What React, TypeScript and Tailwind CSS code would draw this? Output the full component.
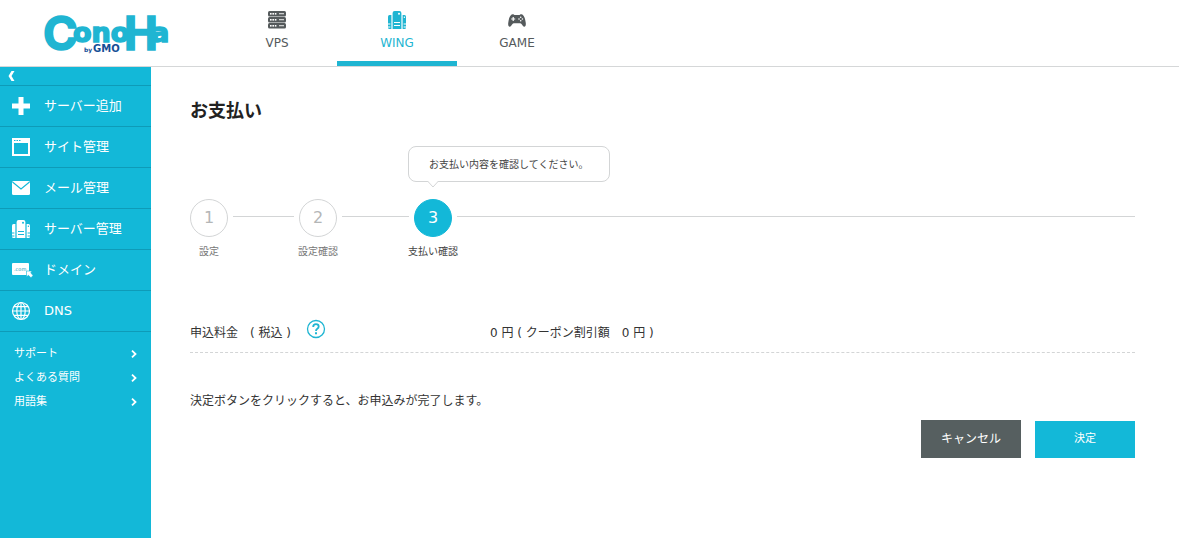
import type { ReactNode } from "react";

function ServerRackIcon() {
  return (
    <svg width="18" height="18" viewBox="0 0 18 18" fill="currentColor" aria-hidden="true">
      {[0, 6, 12].map((y) => (
        <g key={y}>
          <rect x="0" y={y} width="18" height="5.4" rx="1.5" />
          <g fill="#fff">
            <rect x="2" y={y + 2} width="1.6" height="1.6" />
            <rect x="4.4" y={y + 2} width="1.6" height="1.6" />
            <rect x="6.8" y={y + 2} width="1.6" height="1.6" />
            <rect x="11" y={y + 2.3} width="5" height="0.9" />
          </g>
        </g>
      ))}
    </svg>
  );
}

function TowerIcon({ line }: { line: string }) {
  return (
    <svg width="18" height="18" viewBox="0 0 18 18" fill="currentColor" aria-hidden="true">
      <path d="M0 5.5Q0 4 1.5 4H3.4V18H1.5Q0 18 0 16.5Z" />
      <path d="M18 5.5Q18 4 16.5 4H14.6V18H16.5Q18 18 18 16.5Z" />
      <path d="M4.6 2Q4.6 0 6.6 0H11.4Q13.4 0 13.4 2V18H4.6Z" />
      <path d="M6 11.500H12M6 14.500H12M0 13H2.400M0 16H2.400M15.600 13H18M15.600 16H18" stroke={line} />
      <circle cx="11" cy="2.8" r="1" fill={line} />
      <circle cx="16.4" cy="6.2" r="0.7" fill={line} />
    </svg>
  );
}

function GamepadIcon() {
  return (
    <svg width="18" height="13" viewBox="0 0 18 13" fill="currentColor" aria-hidden="true">
      <path d="M4.500 0.300C5.600 0 6.200 1 7 1H11C11.800 1 12.400 0 13.500 0.300C16 1 17 4 17.700 8.500C18.200 11.500 17.300 13 16 12.700C14.500 12.400 13.700 9.300 12.300 9.300H5.700C4.300 9.300 3.500 12.400 2 12.700C0.700 13 -0.200 11.500 0.300 8.500C1 4 2 1 4.500 0.300Z" />
      <g fill="#fff">
        <path d="M4.600 3H5.800V4.400H7.200V5.600H5.800V7H4.600V5.600H3.200V4.400H4.600Z" />
        <circle cx="12.7" cy="3.3" r="0.8" />
        <circle cx="12.7" cy="6.7" r="0.8" />
        <circle cx="11" cy="5" r="0.8" />
        <circle cx="14.4" cy="5" r="0.8" />
      </g>
    </svg>
  );
}

function PlusIcon() {
  return (
    <svg width="20" height="18" viewBox="0 0 20 18" fill="currentColor" aria-hidden="true">
      <path d="M7.500 0H12.500V6.500H19V11.500H12.500V18H7.500V11.500H1V6.500H7.500Z" />
    </svg>
  );
}

function WindowIcon() {
  return (
    <svg width="20" height="18" viewBox="0 0 20 18" aria-hidden="true">
      <path fill="currentColor" fillRule="evenodd" d="M1 0H19V18H1ZM3 5V16H17V5Z" />
      <path stroke="#13b8d8" d="M3 2.500H4.500M5.500 2.500H7M8 2.500H9.500" />
    </svg>
  );
}

function MailIcon() {
  return (
    <svg width="20" height="14" viewBox="0 0 20 14" aria-hidden="true">
      <rect x="1" width="18" height="14" rx="1.5" fill="currentColor" />
      <path d="M1.500 1L10 8L18.500 1" fill="none" stroke="#13b8d8" strokeWidth="1.1" />
    </svg>
  );
}

function DomainIcon() {
  return (
    <svg width="22" height="16" viewBox="0 0 22 16" aria-hidden="true">
      <rect x="1" y="1" width="17" height="12" rx="1" fill="currentColor" />
      <text x="3" y="9" fontSize="5" fontFamily="DejaVu Sans, sans-serif" fill="#0e9bb8">.com</text>
      <path d="M15.500 9H21L19.800 10.800L22 13.500L20 15.800L17.500 13.300L15.500 14.800Z" fill="currentColor" stroke="#13b8d8" strokeWidth="0.6" />
    </svg>
  );
}

function GlobeIcon() {
  return (
    <svg width="20" height="20" viewBox="0 0 20 20" fill="none" stroke="currentColor" strokeWidth="1.2" aria-hidden="true">
      <circle cx="10" cy="10" r="8.5" />
      <ellipse cx="10" cy="10" rx="4.2" ry="8.5" />
      <path d="M10 1.500V18.500M1.500 10H18.500M3 5.700H17M3 14.300H17" />
    </svg>
  );
}

function Chevron() {
  return (
    <svg width="6" height="8" viewBox="0 0 6 8" fill="none" stroke="currentColor" strokeWidth="1.8" aria-hidden="true">
      <path d="M1 0.700L4.500 4L1 7.300" />
    </svg>
  );
}

function Logo() {
  return (
    <svg width="140" height="64" viewBox="0 0 140 64" role="img" aria-label="ConoHa by GMO" fontWeight="700">
      <text fontFamily="DejaVu Sans, sans-serif" fill="#1fb5d2" stroke="#1fb5d2" strokeWidth="1.6">
        <tspan x="3" y="50" fontSize="47" fontFamily="Inter, sans-serif">C</tspan>
        <tspan x="33" y="42" fontSize="27">ono</tspan>
        <tspan x="84" y="50" fontSize="48" fontFamily="Roboto, sans-serif">H</tspan>
        <tspan x="111" y="42" fontSize="27">a</tspan>
      </text>
      <text fill="#164f96" fontFamily="DejaVu Sans, sans-serif">
        <tspan x="44" y="52" fontSize="6">by</tspan>
        <tspan x="53" y="52" fontSize="10">GMO</tspan>
      </text>
    </svg>
  );
}

const tabs = [
  { label: "VPS", icon: <ServerRackIcon /> },
  { label: "WING", icon: <TowerIcon line="#fff" />, active: true },
  { label: "GAME", icon: <GamepadIcon /> },
];

const menu = [
  { label: "サーバー追加", icon: <PlusIcon /> },
  { label: "サイト管理", icon: <WindowIcon /> },
  { label: "メール管理", icon: <MailIcon /> },
  { label: "サーバー管理", icon: <TowerIcon line="#13b8d8" /> },
  { label: "ドメイン", icon: <DomainIcon /> },
  { label: "DNS", icon: <GlobeIcon /> },
];

const links = ["サポート", "よくある質問", "用語集"];

function Header() {
  return (
    <header className="flex border-b border-[#d5d7d8]">
      <a href="#" className="w-[217px] shrink-0 pl-10">
        <Logo />
      </a>
      <nav className="flex">
        {tabs.map((tab) => (
          <a
            key={tab.label}
            href="#"
            className={`flex h-[66px] w-[120px] flex-col items-center border-b-5 pt-[11px] text-[12px] leading-4 ${
              tab.active ? "border-[#1fb5d2] text-[#1fb5d2]" : "border-transparent text-[#555a5c]"
            }`}
          >
            <span className="flex h-[18px] items-center">{tab.icon}</span>
            <span className="mt-[6px]">{tab.label}</span>
          </a>
        ))}
      </nav>
    </header>
  );
}

function Sidebar() {
  return (
    <aside className="w-[151px] shrink-0 bg-[#13b8d8] text-white">
      <button type="button" aria-label="メニューを閉じる" className="flex h-[19px] w-full items-center border-b border-[#0e9bb8] pl-2">
        <svg width="7" height="10" viewBox="0 0 7 10" fill="currentColor" aria-hidden="true">
          <path d="M3.500 0H6.500L3.500 5L6.500 10H3.500L0.500 5Z" />
        </svg>
      </button>
      <nav>
        {menu.map((item) => (
          <a key={item.label} href="#" className="flex h-[41px] items-center border-b border-[#0e9bb8] pl-[11px] text-[13px]">
            <span className="flex w-[33px]">
              <span className={item.label === "サーバー管理" ? "pl-px" : ""}>{item.icon}</span>
            </span>
            {item.label}
          </a>
        ))}
      </nav>
      <ul className="pt-[10px] text-[11px]">
        {links.map((label) => (
          <li key={label}>
            <a href="#" className="flex h-6 items-center justify-between px-[14px]">
              {label}
              <Chevron />
            </a>
          </li>
        ))}
      </ul>
    </aside>
  );
}

function Step({ no, label, active, children }: { no: number; label: string; active?: boolean; children?: ReactNode }) {
  return (
    <li className="relative flex w-[38px] shrink-0 flex-col items-center">
      {children}
      <span
        className={`flex size-[38px] items-center justify-center rounded-full border text-[16px] ${
          active ? "border-[#13b8d8] bg-[#13b8d8] text-white" : "border-[#d3d5d6] text-[#b4b6b7]"
        }`}
      >
        {no}
      </span>
      <span className={`mt-[7px] text-[10px] leading-4 whitespace-nowrap ${active ? "text-[#444]" : "text-[#777]"}`}>{label}</span>
    </li>
  );
}

function StepLine({ className }: { className: string }) {
  return <li aria-hidden="true" className={`mt-[17px] h-px bg-[#d3d5d6] ${className}`} />;
}

function Steps() {
  return (
    <ol className="mt-[77px] flex gap-[5px]">
      <Step no={1} label="設定" />
      <StepLine className="w-[61px]" />
      <Step no={2} label="設定確認" />
      <StepLine className="w-[67px]" />
      <Step no={3} label="支払い確認" active>
        <div className="absolute bottom-[78px] -left-[6px] flex h-9 w-[202px] items-center rounded-lg border border-[#d3d5d6] bg-white pl-5 text-[10px] whitespace-nowrap text-[#444]">
          お支払い内容を確認してください。
          <svg className="absolute top-full left-[18px]" width="12" height="7" viewBox="0 0 12 7" aria-hidden="true">
            <path d="M0.500 0L6 6L11.500 0" fill="#fff" stroke="#d3d5d6" />
          </svg>
        </div>
      </Step>
      <StepLine className="flex-1" />
    </ol>
  );
}

export default function App() {
  return (
    <div className="flex min-h-screen flex-col bg-white font-['DejaVu_Sans','Noto_Sans_CJK_JP',sans-serif] text-[#333]">
      <Header />
      <div className="flex flex-1">
        <Sidebar />
        <main className="min-w-0 flex-1 pt-8 pr-11 pl-[39px] text-[12px]">
          <h1 className="text-[18px] leading-[23px] font-bold text-[#222]">お支払い</h1>
          <Steps />
          <dl className="mt-[59px] flex h-[34px] border-b border-dashed border-[#d3d5d6] leading-7">
            <dt className="flex w-[300px] shrink-0">
              申込料金　( 税込 )
              <button type="button" aria-label="ヘルプ" className="ml-[15px] flex h-5">
                <svg width="20" height="20" viewBox="0 0 20 20" fill="none" stroke="#1fb5d2" aria-hidden="true">
                  <circle cx="10" cy="10" r="8.5" strokeWidth="1.3" />
                  <path d="M7.200 8Q7.200 5.200 10 5.200Q12.700 5.200 12.700 7.600Q12.700 9 11.300 9.800Q10 10.600 10 12" strokeWidth="1.8" />
                  <path d="M10 13.300V15.300" strokeWidth="2" />
                </svg>
              </button>
            </dt>
            <dd>0 円 ( クーポン割引額　0 円 )</dd>
          </dl>
          <p className="mt-9 leading-6">決定ボタンをクリックすると、お申込みが完了します。</p>
          <div className="mt-[7px] flex items-end justify-end gap-[14px] text-white">
            <button type="button" className="h-[38px] w-[100px] bg-[#565f60] text-[12px]">キャンセル</button>
            <button type="button" className="h-[37px] w-[100px] bg-[#13b8d8] text-[11px]">決定</button>
          </div>
        </main>
      </div>
    </div>
  );
}
